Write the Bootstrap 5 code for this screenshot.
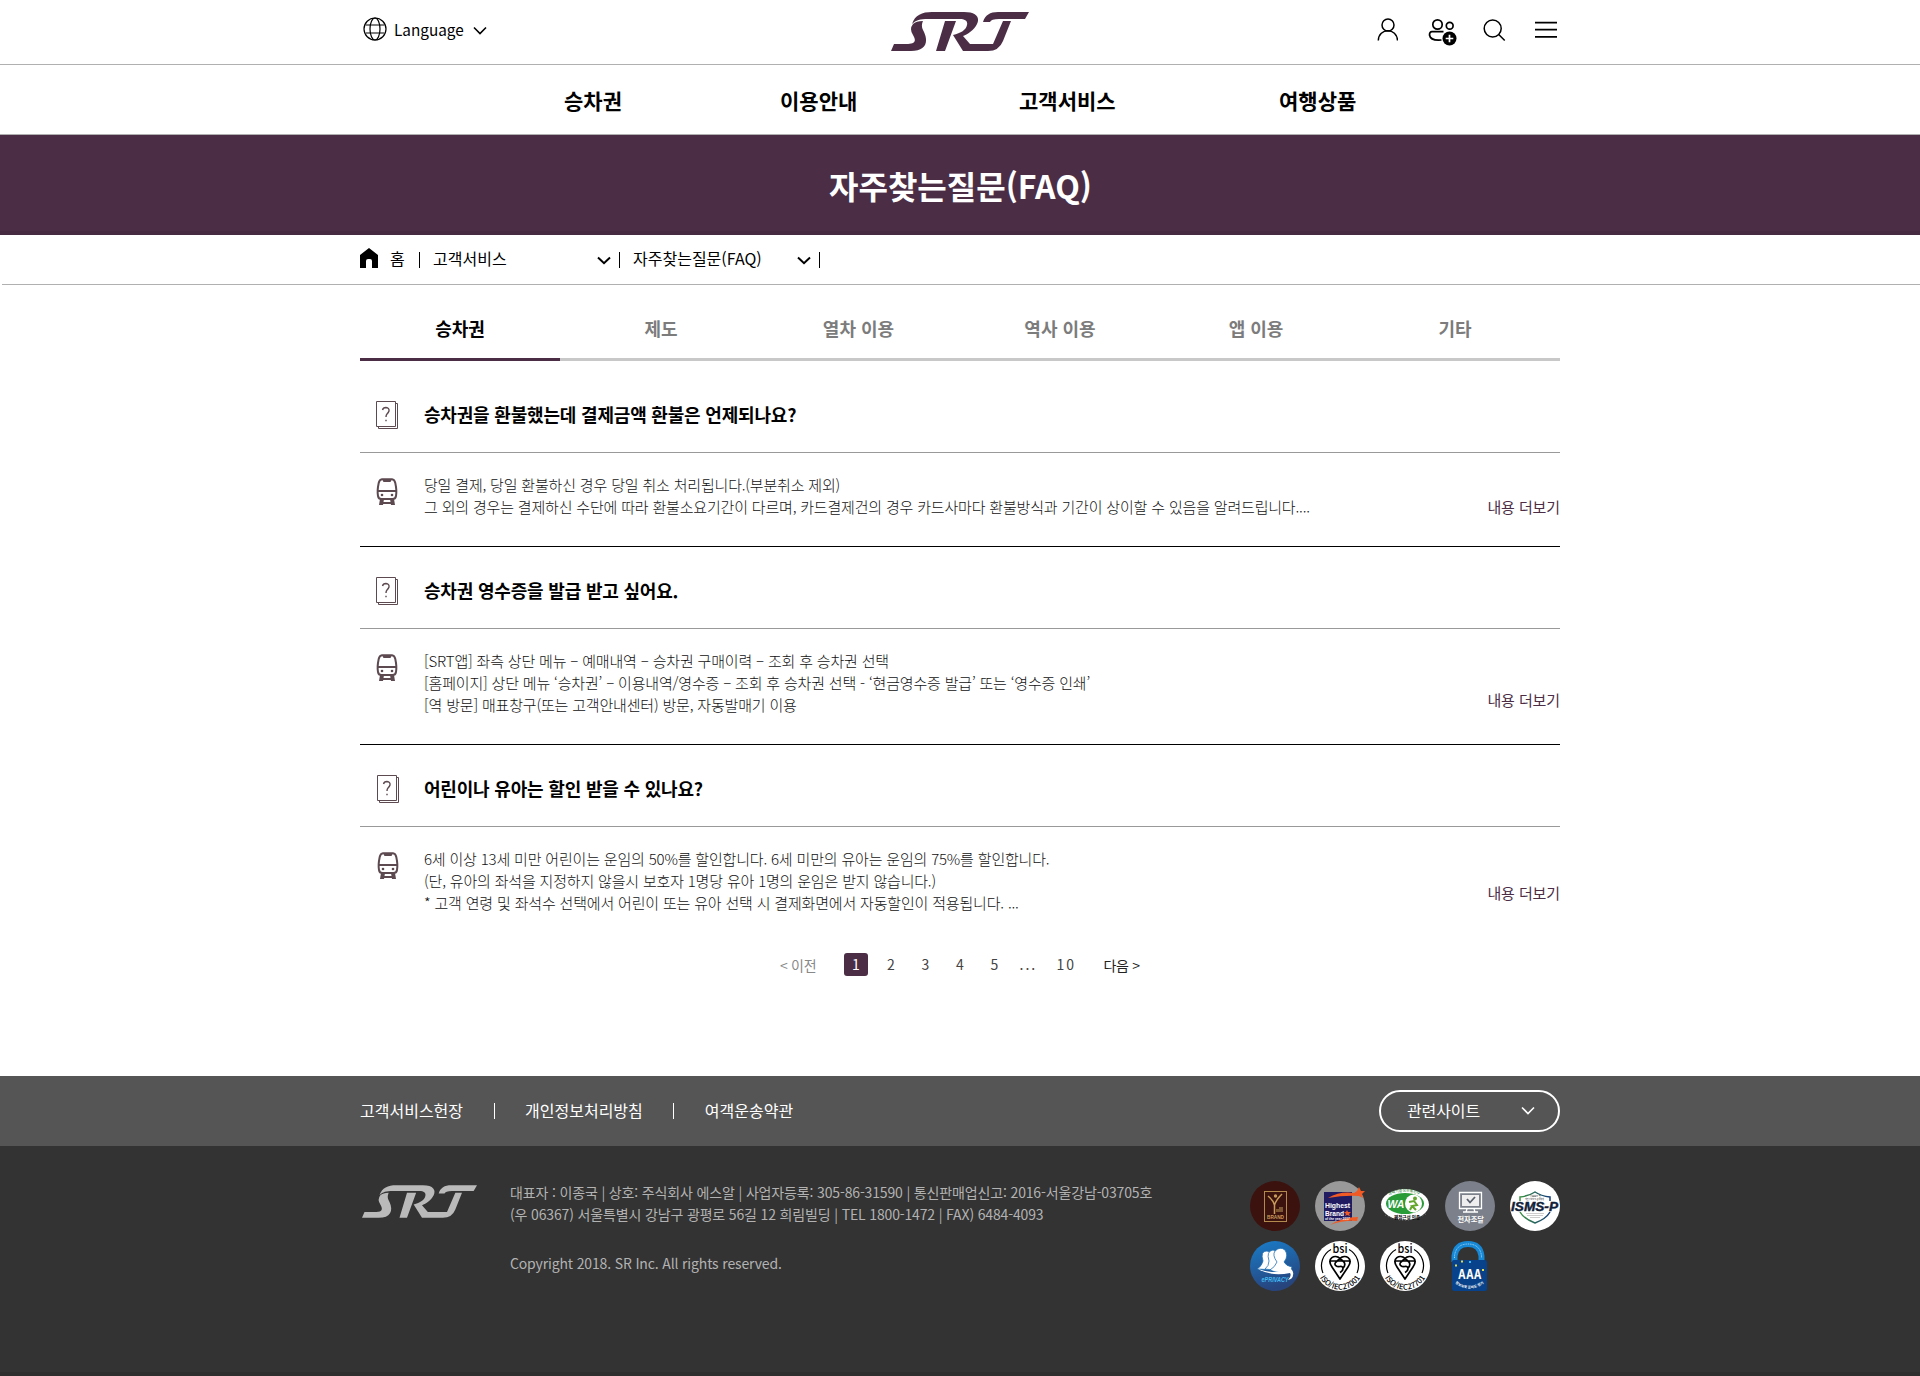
<!DOCTYPE html>
<html lang="ko">
<head>
<meta charset="utf-8">
<meta name="viewport" content="width=device-width, initial-scale=1">
<title>자주찾는질문(FAQ) | SRT</title>
<link href="https://cdn.jsdelivr.net/npm/bootstrap@5.3.0/dist/css/bootstrap.min.css" rel="stylesheet">
<style>
:root{--srt:#4b2e46}
body{font-family:"Noto Sans CJK KR","Noto Sans",sans-serif;color:#000;font-size:16px;line-height:22px}
a{color:inherit;text-decoration:none}
svg{display:block;flex:none}
.wrap{width:1200px;margin:0 auto}
.topbar{height:65px;border-bottom:1px solid #b0b0b0}
.side{width:531px}
.tools-left{padding:17px 0 0 3px}
.tools-right{padding:18px 3px 0 0;gap:22px}
.lang{margin:-1px 0 0 7px;font-size:15.3px}
.gnb{height:70px;border-bottom:1px solid #b0b0b0;font-size:21px;font-weight:700}
.gnb .wrap{padding-left:204px;padding-top:1px}
.gnb a:nth-child(1){width:216px}
.gnb a:nth-child(2){width:239px}
.gnb a:nth-child(3){width:260px}
.hero{height:100px;background:var(--srt);border-bottom:4px solid #462a41;color:#fff}
.hero h1{font-size:32px;font-weight:700;margin:0;padding:4px 0 0 1px}
.crumbs{height:50px;border-bottom:1px solid #b0b0b0;margin-left:2px}
.crumbs .wrap{font-size:16px;padding-bottom:4px;position:relative;left:-1px}
.crumbs svg,.crumbs .vbar{margin-top:5px}
.vbar{width:1px;height:16px;background:#000}
.tabs a{width:200px;height:76px;padding-top:32px;text-align:center;font-size:18px;font-weight:700;color:#7c7c7c;border-bottom:3px solid #c8c8c8}
.tabs a.on{color:#000;border-color:var(--srt)}
.tabs a:nth-child(2){padding-left:2px}
.tabs a:nth-child(3){padding-right:3px}
.tabs a:nth-child(5){padding-right:8px}
.tabs a:nth-child(6){padding-right:10px}
.q{height:82px;border-bottom:1px solid #999;padding:8px 0 0 15px}
.q h2{font-size:18px;font-weight:700;margin:-2px 0 0 25px;letter-spacing:-.19px}
.a{border-bottom:1px solid #000;padding:21px 0 0 15px}
.a p{margin:0 0 0 25px;width:1040px;font-size:15px;letter-spacing:-.18px;font-weight:300;color:#111;white-space:nowrap}
.a svg{margin-top:4px}
.more{font-size:15px;letter-spacing:-.1px;color:var(--srt)}
.pager{font-size:14px;color:#444;letter-spacing:2px;height:24px;margin:0 0 99px 419px}
.pager .word{letter-spacing:-.3px;padding:1px 0 0 1px}
.pager .now{width:24px;height:23px;border-radius:3px;background:var(--srt);color:#fff;padding-left:2px}
.f1{height:70px;background:#555;color:#fff}
.f1 .doc{margin-top:-2px}
.f1 .vbar{margin:0 30.5px}
.f2{height:230px;background:#333;border-bottom:4px solid #2e2e2e;color:#b2b2b2}
.faddr{margin:35px 0 0 33px;font-size:14px;letter-spacing:-.15px}
.related{width:181px;height:42px;border:2px solid #fff;border-radius:21px;padding:0 23px 2px 26px;font-size:16px;letter-spacing:-.1px}
.marks{display:grid;grid-template-columns:repeat(5,50px);gap:10px 15px;margin-top:35px}
.marks svg{overflow:visible}
.latin{font-family:"Liberation Sans",sans-serif}
</style>
</head>
<body>
<svg width="0" height="0" class="position-absolute">
<defs>
<symbol id="srt" viewBox="0 0 138 39"><path d="M21 12C24 3 31 0 41 0H73C86 0 89 6 86 12C83 18 77 22 72 24L79 32H102L112 9H120L112 29Q108 39 97 39H72L62 23C70 21 75 18 76 13C77 9 74 7 69 7H37C29 7 25 8 21 12ZM22 12Q25 9 32 9C30 14 31 16 33 20C38 31 34 39 20 39H0L3 32H17C25 32 25 28 22 23Q18 17 22 12ZM54 9H65L54 39H45ZM92 10C94 3 99 0 107 0H138L134 7H108Q100 7 99 10Z" fill="currentColor"/></symbol>
<symbol id="down" viewBox="0 0 14 9"><path d="M1 1.5L7 7.5L13 1.5" fill="none" stroke="currentColor" stroke-width="1.6"/></symbol>
<symbol id="downbold" viewBox="0 0 14 9"><path d="M1 1.5L7 7.200L13 1.5" fill="none" stroke="currentColor" stroke-width="2"/></symbol>
<symbol id="ask" viewBox="0 0 24 29"><path d="M20.500 2.500H22.500V27.500H3.500V25.500M1.500 .5H20.500V25.500H1.500Z" fill="none" stroke="#5d4a50"/><path d="M7.500 9Q8 6.500 11 6.500Q14.500 7 14 10Q13.500 11.500 12 13Q11 14 11 16M11 18.700V20.200" fill="none" stroke="#5d4a50" stroke-width="1.400"/></symbol>
<symbol id="train" viewBox="0 0 22 28"><path d="M6 1.200H16Q18.500 1.500 19.300 5Q21 13 20 18Q19.500 21 16.500 21H5.500Q2.500 21 2 18Q1 13 2.700 5Q3.500 1.500 6 1.200ZM2 13H20" fill="none" stroke="#5d4a50" stroke-width="2"/><path d="M6 1H16L14.500 4H7.500ZM4 21H8L7 27H3ZM14 21H18L19 27H15ZM6 24H16V26H6Z" fill="#5d4a50"/><circle cx="6" cy="17" r="1.300" fill="#5d4a50"/><circle cx="16" cy="17" r="1.300" fill="#5d4a50"/></symbol>
<symbol id="bsi" viewBox="0 0 50 50"><circle cx="25" cy="25" r="25" fill="#fff"/><path d="M16 8.500A18.500 18.500 0 0 0 8 32M34 8.500A18.500 18.500 0 0 1 42 32" fill="none" stroke="#000" stroke-width="1.200"/><path d="M25 38L17 26C11 17 20 13 25 17.500C30 13 39 17 33 26ZM15.500 20H34.500M25 17.500L21 21C18 24 22 26 25 25.500C29 25 29 29 25 31.500M25 17.500L29 21Q31 24 28 27" fill="none" stroke="#000" stroke-width="1.700" stroke-linejoin="round"/></symbol>
</defs>
</svg>

<header>
<div class="topbar"><div class="wrap d-flex align-items-start h-100">
  <div class="side tools-left d-flex align-items-center">
    <svg width="24" height="24" viewBox="0 0 24 24" fill="none" stroke="#000" stroke-width="1.200"><circle cx="12" cy="12" r="11"/><ellipse cx="12" cy="12" rx="5" ry="11"/><path d="M2.500 8H21.500M2.500 16H21.500"/></svg>
    <a href="#" class="lang">Language</a>
    <svg width="14" height="9" style="margin:3px 0 0 9px"><use href="#down"/></svg>
  </div>
  <svg width="138" height="39" style="margin-top:12px;color:#4b2e46"><use href="#srt"/></svg>
  <div class="side tools-right d-flex justify-content-end">
    <svg width="22" height="24" viewBox="0 0 22 24" fill="none" stroke="#000" stroke-width="1.500"><circle cx="12" cy="7" r="6"/><path d="M2.300 22.500C2.500 9.500 21.200 9.500 21.500 22.500"/></svg>
    <svg width="34" height="28" viewBox="0 0 34 28" style="margin-left:6px" fill="none" stroke="#000" stroke-width="1.700"><circle cx="11.500" cy="6.500" r="4.700"/><circle cx="23.700" cy="7.800" r="3.400"/><path d="M17.500 13.700H6Q3.500 13.700 3.500 17Q4.500 23 15.500 22"/><circle cx="23.500" cy="20.500" r="7" fill="#000" stroke="none"/><path d="M19.700 20.500H27.300M23.500 16.700V24.300" stroke="#fff"/></svg>
    <svg width="23" height="24" viewBox="0 0 23 24" style="margin-left:1px" fill="none" stroke="#000" stroke-width="1.500"><circle cx="9.700" cy="10.500" r="8.500"/><path d="M15.700 16.500L21.700 22.500"/></svg>
    <svg width="22" height="24" viewBox="0 0 22 24" style="margin-left:7px" stroke="#000" stroke-width="1.800"><path d="M0 4.600H22M0 11.700H22M0 18.800H22"/></svg>
  </div>
</div></div>
<nav class="gnb"><div class="wrap d-flex align-items-center h-100"><a href="#">승차권</a><a href="#">이용안내</a><a href="#">고객서비스</a><a href="#">여행상품</a></div></nav>
</header>
<div class="hero d-flex align-items-center justify-content-center"><h1>자주찾는질문(FAQ)</h1></div>
<div class="crumbs"><div class="wrap d-flex align-items-center h-100">
  <svg width="18" height="20" viewBox="0 0 18 20" style="margin:0 12px 0 0"><path d="M0 20V7L9 0L18 7V20H12V13Q12 11 10 11H8Q6 11 6 13V20Z"/></svg>
  <a href="#" style="width:29px">홈</a><i class="vbar"></i><a href="#" style="margin-left:13px;width:164px">고객서비스</a>
  <svg width="14" height="9"><use href="#downbold"/></svg><i class="vbar" style="margin-left:8px"></i>
  <a href="#" style="margin-left:13px;width:164px">자주찾는질문(FAQ)</a><svg width="14" height="9"><use href="#downbold"/></svg><i class="vbar" style="margin-left:8px"></i>
</div></div>

<main class="wrap">
<nav class="tabs d-flex"><a class="on" href="#">승차권</a><a href="#">제도</a><a href="#">열차 이용</a><a href="#">역사 이용</a><a href="#">앱 이용</a><a href="#">기타</a></nav>
<section style="padding-top:10px">
  <div class="q d-flex align-items-center"><svg width="24" height="29"><use href="#ask"/></svg><h2>승차권을 환불했는데 결제금액 환불은 언제되나요?</h2></div>
  <div class="a d-flex align-items-start" style="height:94px"><svg width="24" height="28"><use href="#train"/></svg><p>당일 결제, 당일 환불하신 경우 당일 취소 처리됩니다.(부분취소 제외)<br>그 외의 경우는 결제하신 수단에 따라 환불소요기간이 다르며, 카드결제건의 경우 카드사마다 환불방식과 기간이 상이할 수 있음을 알려드립니다....</p><a class="more ms-auto" style="margin-top:22px">내용 더보기</a></div>
  <div class="q d-flex align-items-center"><svg width="24" height="29"><use href="#ask"/></svg><h2>승차권 영수증을 발급 받고 싶어요.</h2></div>
  <div class="a d-flex align-items-start" style="height:116px"><svg width="24" height="28"><use href="#train"/></svg><p>[SRT앱] 좌측 상단 메뉴 – 예매내역 – 승차권 구매이력 – 조회 후 승차권 선택<br>[홈페이지] 상단 메뉴 ‘승차권’ – 이용내역/영수증 – 조회 후 승차권 선택 - ‘현금영수증 발급’ 또는 ‘영수증 인쇄’<br>[역 방문] 매표창구(또는 고객안내센터) 방문, 자동발매기 이용</p><a class="more ms-auto" style="margin-top:39px">내용 더보기</a></div>
  <div class="q d-flex align-items-center" style="padding-left:16px"><svg width="24" height="29"><use href="#ask"/></svg><h2 style="margin-left:24px">어린이나 유아는 할인 받을 수 있나요?</h2></div>
  <div class="a d-flex align-items-start border-0" style="height:125px;padding-left:16px"><svg width="24" height="28"><use href="#train"/></svg><p style="margin-left:24px">6세 이상 13세 미만 어린이는 운임의 50%를 할인합니다. 6세 미만의 유아는 운임의 75%를 할인합니다.<br>(단, 유아의 좌석을 지정하지 않을시 보호자 1명당 유아 1명의 운임은 받지 않습니다.)<br>* 고객 연령 및 좌석수 선택에서 어린이 또는 유아 선택 시 결제화면에서 자동할인이 적용됩니다. ...</p><a class="more ms-auto" style="margin-top:34px">내용 더보기</a></div>
</section>
<nav class="pager d-flex align-items-center">
<a class="word" style="width:65px;color:#888">&lt; 이전</a><a class="now d-flex align-items-center justify-content-center">1</a><a style="margin-left:19px;width:34.500px">2</a><a style="width:34.500px">3</a><a style="width:34.500px">4</a><a style="width:29px">5</a><span style="width:37px">...</span><a style="width:46px">10</a><a class="word" style="color:#222">다음 &gt;</a>
</nav>
</main>

<footer style="margin-top:100px">
<div class="f1"><div class="wrap d-flex align-items-center h-100">
<a class="doc">고객서비스헌장</a><i class="vbar bg-white"></i><a class="doc">개인정보처리방침</a><i class="vbar bg-white"></i><a class="doc">여객운송약관</a>
<a class="related ms-auto d-flex align-items-center justify-content-between">관련사이트<svg width="14" height="9"><use href="#down"/></svg></a>
</div></div>
<div class="f2"><div class="wrap d-flex align-items-start">
<svg width="115" height="33" style="margin:39px 0 0 2px;color:#bababa"><use href="#srt"/></svg>
<div class="faddr">대표자 : 이종국 | 상호: 주식회사 에스알 | 사업자등록: 305-86-31590 | 통신판매업신고: 2016-서울강남-03705호<br>(우 06367) 서울특별시 강남구 광평로 56길 12 희림빌딩 | TEL 1800-1472 | FAX) 6484-4093<div style="margin-top:27px">Copyright 2018. SR Inc. All rights reserved.</div></div>
<div class="marks ms-auto">
<svg width="50" height="50" font-size="5"><circle cx="25" cy="25" r="25" fill="#3b120e"/><rect x="14.500" y="10.500" width="22" height="30" fill="none" stroke="#b38a4e"/><path d="M18 15Q23 19 24.500 24Q26 19 32 13M24.500 23V33" fill="none" stroke="#c79b59" stroke-width="1.500"/><path d="M26 31V28H29V26H33V31Z" fill="#7c5632"/><circle cx="25.500" cy="15" r="1.700" fill="#c79b59"/><text class="latin" x="17" y="38" fill="#c79b59" font-weight="700" textLength="17" lengthAdjust="spacingAndGlyphs">BRAND</text></svg>
<svg width="50" height="50" font-weight="700" fill="#fff" class="latin"><circle cx="25" cy="25" r="25" fill="#999"/><path d="M9 11H37V40H9Z" fill="#211b61"/><path d="M13 17Q25 10 39 12L42 10L44 6L46 10L50 10L47 13L48 17L44 15Q30 14 13 17ZM15 44Q28 36 43 36L42 40Q29 39 15 44Z" fill="#f15a24"/><text x="10" y="27" font-size="7.600" textLength="25" lengthAdjust="spacingAndGlyphs">Highest</text><text x="10" y="34.500" font-size="7.300" textLength="19" lengthAdjust="spacingAndGlyphs">Brand</text><text x="10" y="39.300" font-size="3.300">of the year 2017</text><path d="M32 29L33 31H36L34 33L35 35L32 34L30 35L31 33L29 31H31Z" fill="#f15a24"/></svg>
<svg width="50" height="50"><ellipse cx="25" cy="23.500" rx="24" ry="15.500" fill="#fff"/><ellipse cx="25" cy="22.500" rx="19" ry="10.500" fill="#299b37"/><ellipse cx="33.500" cy="22.500" rx="8.500" ry="9" fill="#fff"/><path id="waTop" d="M9 14.500Q25 7 41 14.500" fill="none"/><text font-size="3.800" fill="#187426"><textPath href="#waTop">과학기술정보통신부</textPath></text><path d="M5 34Q25 45 46 33" fill="none" stroke="#777" stroke-dasharray="1 2"/><text class="latin" x="7.500" y="27" font-size="10.500" font-weight="700" font-style="italic" fill="#fff">WA</text><path d="M29 21L34 20L37 24L32 25L36 29M30 29L32 25" fill="none" stroke="#62a72b" stroke-width="2"/><circle cx="35" cy="17.500" r="2" fill="#62a72b"/><text x="14" y="37.500" font-size="4.500" font-weight="700">웹접근성 인증</text></svg>
<svg width="50" height="50"><circle cx="25" cy="25" r="25" fill="#7b808a"/><path d="M14.500 11.500H36.500V27.500H14.500ZM22 28L21 31H30L29 28M18 31H33" fill="none" stroke="#fff" stroke-width="1.300"/><path d="M17 14H34V25H17Z" fill="#eee"/><path d="M22 18L25 21.500L30 16" fill="none" stroke="#59606c" stroke-width="1.800"/><text x="12.500" y="40.500" font-size="7.200" font-weight="700" fill="#fff">전자조달</text></svg>
<svg width="50" height="50"><defs><linearGradient id="shield"><stop stop-color="#3d9144"/><stop offset="1" stop-color="#123b78"/></linearGradient></defs><circle cx="25" cy="25" r="25" fill="#fff"/><path d="M10 20V16Q19 15 25 11Q31 15 40 16V20M10 31Q14 38 25 42Q36 38 40 31" fill="none" stroke="url(#shield)" stroke-width="1.500"/><text x="20" y="16" font-size="2.200">정보보호 및</text><text x="15" y="19" font-size="2">개인정보보호 관리체계</text><text x="1" y="29.500" font-size="12" class="latin" font-weight="700" font-style="italic" fill="#111e39" stroke="#111e39" stroke-width=".4" textLength="47" lengthAdjust="spacingAndGlyphs">ISMS-P</text><path d="M16 32.500H34M17 34.500H33M20 36.500H30" stroke="#aaa" stroke-width=".6"/></svg>
<svg width="50" height="50"><defs><linearGradient id="bl" x2=".3" y2="1"><stop stop-color="#197eca"/><stop offset="1" stop-color="#27447d"/></linearGradient></defs><circle cx="25" cy="25" r="25" fill="url(#bl)"/><g fill="#fff" stroke="#2272b5" stroke-width=".8"><path d="M7 28Q12 25 13 20Q10 10 17 10Q23 11 21 20L25 29Z"/><path d="M15 28Q19 25 19 20Q16 10 23 9Q29 10 28 20L31 30Z"/><path d="M20 29Q25 26 27 21Q22 14 25 10Q30 5 35 9Q39 15 34 21Q36 25 42 26L40 31Q28 33 20 29Z"/></g><path d="M8 28Q25 34 39 28L41 28Q44 31 43 34Q43 38 38 39Q42 35 40 32Q22 36 8 28Z" fill="#fff"/><text class="latin" x="11.500" y="41" font-size="6.300" font-style="italic" font-weight="700" fill="#43b8f0" textLength="27" lengthAdjust="spacingAndGlyphs">ePRIVACY</text></svg>
<svg width="50" height="50"><use href="#bsi"/><path id="iso1" d="M4 35A23 23 0 0 0 46 35" fill="none"/><text x="17.500" y="12" font-size="12" font-weight="500" textLength="15" lengthAdjust="spacingAndGlyphs">bsi</text><text font-size="7.600" font-weight="500" text-anchor="middle"><textPath href="#iso1" startOffset="50%">ISO/IEC27001</textPath></text></svg>
<svg width="50" height="50"><use href="#bsi"/><text x="17.500" y="12" font-size="12" font-weight="500" textLength="15" lengthAdjust="spacingAndGlyphs">bsi</text><text font-size="7.600" font-weight="500" text-anchor="middle"><textPath href="#iso1" startOffset="50%">ISO/IEC27701</textPath></text></svg>
<svg width="50" height="50"><path d="M9.500 21V15Q11 3 23 3Q35 3 36.500 15V22" fill="none" stroke="#1788d5" stroke-width="6"/><path d="M9.500 17V15Q11 3 23 3Q35 3 36.500 15V17" fill="none" stroke="#a5d5f2" stroke-width="1" stroke-dasharray="1 .7"/><rect x="7" y="19" width="35" height="31" rx="2" fill="#07428a"/><path d="M16 20.500H18M10 24.500H12M37 29H39" stroke="#e4dc4c" stroke-width="2"/><path d="M24 21H26" stroke="#35b5f2" stroke-width="2"/><text x="13" y="38" font-family="Inter" font-size="13" font-weight="700" fill="#fff" textLength="23.500" lengthAdjust="spacingAndGlyphs">AAA</text><path id="aaaArc" d="M11 43Q24 52 38 43" fill="none"/><text font-size="3.500" fill="#fff" font-weight="700" text-anchor="middle"><textPath href="#aaaArc" startOffset="50%">정보보호 준비도 평가</textPath></text></svg>
</div>
</div></div>
</footer>
<script src="https://cdn.jsdelivr.net/npm/bootstrap@5.3.0/dist/js/bootstrap.bundle.min.js"></script>
</body>
</html>
